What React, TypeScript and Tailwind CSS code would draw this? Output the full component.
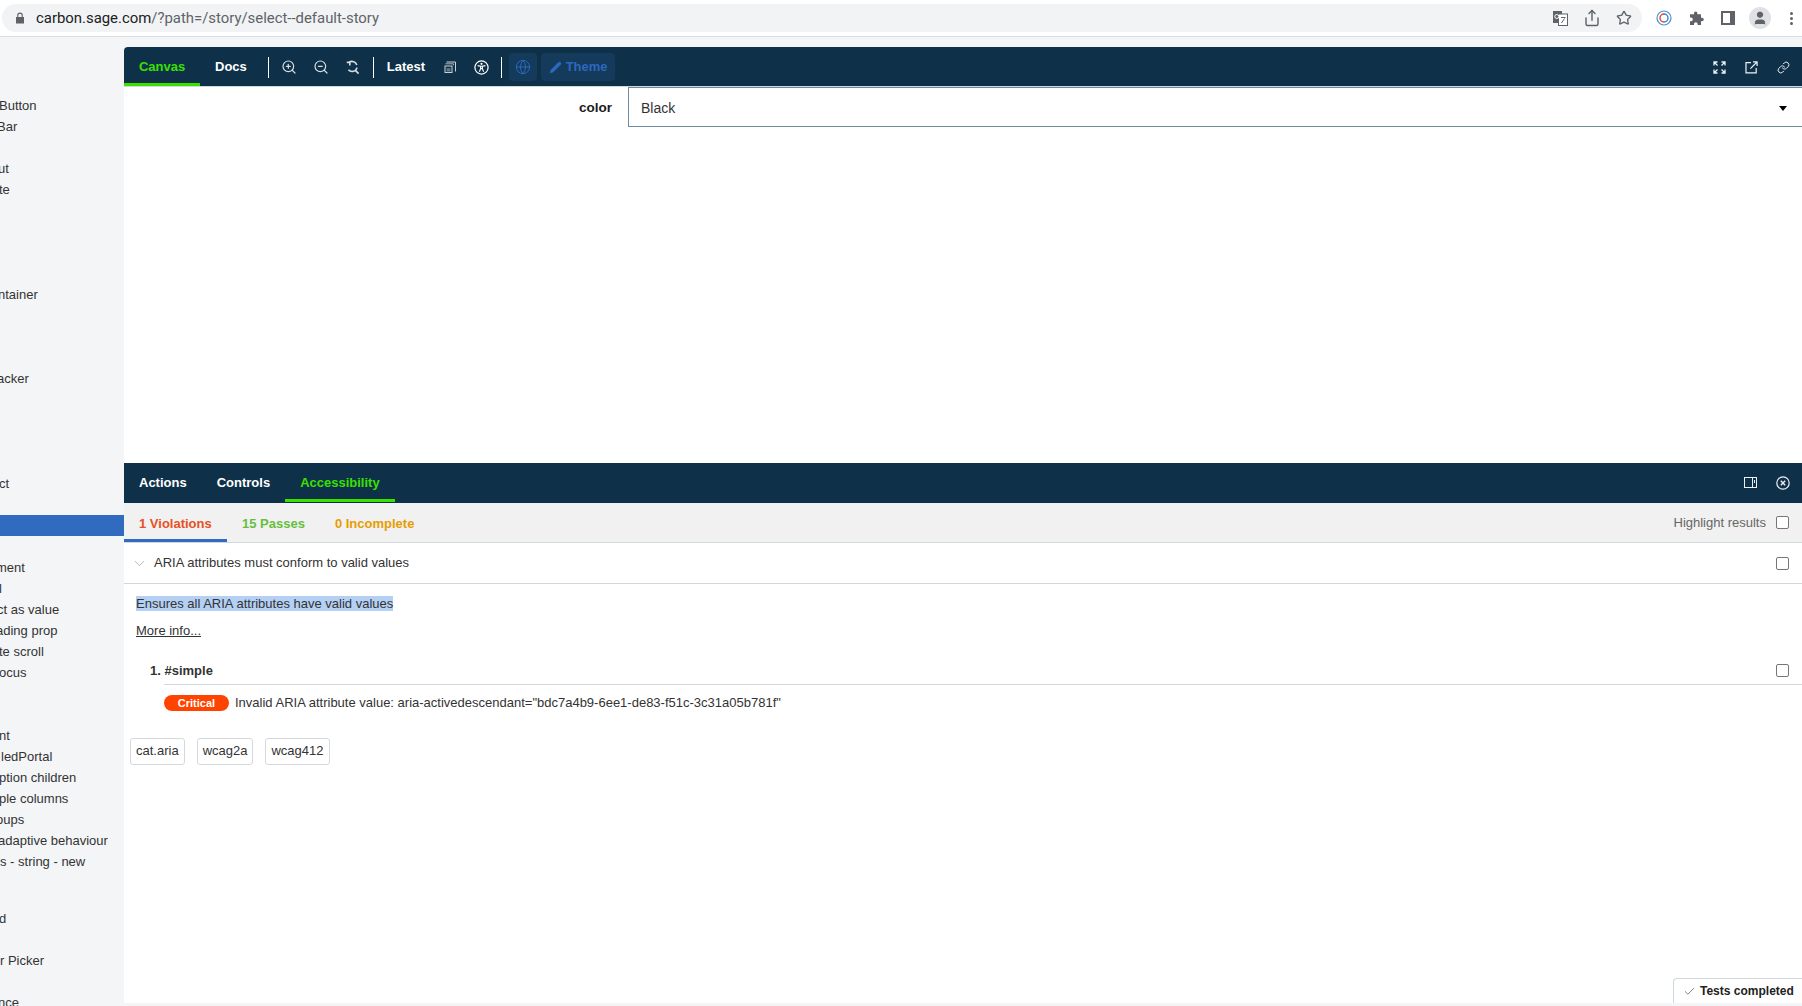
import { ChevronDown, Check, Globe, Link, Pencil, Share, Star, User, ZoomIn, ZoomOut } from "lucide-react";

const sidebarRows: { text?: string; cls?: string }[] = [
  { text: "Button", cls: "-ml-[1px]" },
  { text: "Bar", cls: "-ml-[3px]" },
  {},
  { text: "ut", cls: "-ml-[2px]" },
  { text: "te", cls: "-ml-[1px]" },
  {},
  {},
  {},
  {},
  { text: "ntainer", cls: "-ml-[2px]" },
  {},
  {},
  {},
  { text: "acker", cls: "-ml-[3px]" },
  {},
  {},
  {},
  {},
  { text: "ct", cls: "-ml-[1px]" },
  {},
  { cls: "bg-[#306bc0]" },
  {},
  { text: "ment", cls: "-ml-[4px]" },
  { text: "l", cls: "-ml-[1px]" },
  { text: "ct as value", cls: "-ml-[3px]" },
  { text: "ading prop", cls: "-ml-[4px]" },
  { text: "te scroll", cls: "-ml-[1px]" },
  { text: "ocus", cls: "-ml-[1px]" },
  {},
  {},
  { text: "nt", cls: "-ml-[1px]" },
  { text: "ledPortal", cls: "ml-[1px]" },
  { text: "ption children", cls: "-ml-[1px]" },
  { text: "ple columns", cls: "-ml-[1px]" },
  { text: "oups", cls: "-ml-[4px]" },
  { text: "adaptive behaviour", cls: "-ml-[2px]" },
  { text: "s - string - new" },
  {},
  { cls: "h-[15px]" },
  { text: "d", cls: "-ml-[1px]" },
  {},
  { text: "r Picker" },
  {},
  { text: "nce", cls: "-ml-[2px]" },
];

function ResetZoom() {
  return (
    <svg width="15" height="15" viewBox="0 0 15 15" fill="none" stroke="currentColor" strokeWidth="1.6">
      <path d="M4.2 2.2A5 5 0 0 1 11.8 5M12 7.6A5 5 0 0 1 3.4 9.8" />
      <path d="M10.4 10.4L13.6 13.6" />
      <path d="M1.8 2.4h3v3" />
    </svg>
  );
}

function LayersIcon() {
  return (
    <svg width="12" height="12" viewBox="0 0 12 12" fill="none" stroke="currentColor" strokeWidth="1">
      <path d="M2.5 1h9v9.5" />
      <path d="M1.5 2.8h8v1.4" opacity="0.8" />
      <rect x="1" y="5" width="7" height="6.5" />
      <rect x="2.5" y="7.2" width="4" height="3.4" fill="currentColor" opacity="0.45" stroke="none" />
    </svg>
  );
}

function AccessIcon() {
  return (
    <svg width="15" height="15" viewBox="0 0 15 15" fill="none" stroke="#fff">
      <circle cx="7.5" cy="7.5" r="6.6" strokeWidth="1.2" />
      <circle cx="7.5" cy="3.8" r="1.1" fill="#fff" stroke="none" />
      <path d="M3.6 5.6L6.6 6.3V8.6L5.4 11.8M11.4 5.6L8.4 6.3V8.6L9.6 11.8M6.6 6.3H8.4M6.6 8.6H8.4" strokeWidth="1.1" />
    </svg>
  );
}

function FullIcon() {
  return (
    <svg width="13" height="13" viewBox="0 0 13 13" fill="none" stroke="currentColor" strokeWidth="1.3">
      <path d="M1 4.5V1h3.5M1 1l3.5 3.5M12 4.5V1H8.5M12 1L8.5 4.5M1 8.5V12h3.5M1 12l3.5-3.5M12 8.5V12H8.5M12 12L8.5 8.5" />
    </svg>
  );
}

function OpenIcon() {
  return (
    <svg width="13" height="13" viewBox="0 0 13 13" fill="none" stroke="currentColor" strokeWidth="1.2">
      <path d="M6 1.6H1v10.2h10.2V7" />
      <path d="M5.4 7.6L12 1M8 .9h4.1V5" />
    </svg>
  );
}

function PanelIcon() {
  return (
    <svg width="13" height="11" viewBox="0 0 13 11" fill="none" stroke="currentColor" strokeWidth="1">
      <rect x="0.5" y="0.5" width="12" height="10" />
      <path d="M8.5 0.5v10" />
      <path d="M10.5 3v3" />
    </svg>
  );
}

function CloseCircle() {
  return (
    <svg width="14" height="14" viewBox="0 0 14 14" fill="none" stroke="currentColor" strokeWidth="1.2">
      <circle cx="7" cy="7" r="6.2" />
      <path d="M4.8 4.8l4.4 4.4M9.2 4.8l-4.4 4.4" strokeWidth="1.4" />
    </svg>
  );
}

function Box() {
  return <span className="block h-[13px] w-[13px] rounded-[2px] border border-[#767676] bg-white" />;
}

function ChromeBar() {
  return (
    <div className="flex h-[37px] shrink-0 items-center border-b border-[#dcdde0] bg-white pl-[2px]">
      <div className="flex h-[28px] w-[1640px] items-center rounded-full bg-[#f1f3f4] pl-[13px]">
        <svg width="10" height="12" viewBox="0 0 10 12" fill="#5f6368">
          <path d="M2.2 5V3.4a2.8 2.8 0 0 1 5.6 0V5H9v6.4H1V5zM3.3 5h3.4V3.4a1.7 1.7 0 0 0-3.4 0z" />
        </svg>
        <span className="ml-[11px] font-['Roboto',sans-serif] text-[14.9px] text-[#5f6368] [font-variant-ligatures:none]">
          <span className="text-[#202124]">carbon.sage.com</span>/?path=/story/select--default-story
        </span>
        <div className="ml-auto flex items-center gap-[15px] pr-[10px] text-[#5f6368]">
          <svg width="15" height="15" viewBox="0 0 15 15">
            <rect x="0" y="0" width="9" height="12" fill="#5f6368" />
            <rect x="5.5" y="3" width="9" height="11.5" fill="#fff" stroke="#5f6368" />
            <path d="M8 6.5h4.5M8.5 12l3-4.5" stroke="#5f6368" fill="none" />
            <circle cx="3.8" cy="5.5" r="2" fill="none" stroke="#fff" />
          </svg>
          <Share size={18} strokeWidth={1.9} />
          <Star size={16} strokeWidth={2} />
        </div>
      </div>
      <div className="ml-[14px] flex items-center text-[#5f6368]">
        <svg width="16" height="16" viewBox="0 0 16 16" fill="none">
          <circle cx="8" cy="8" r="7" stroke="#4a90d0" strokeWidth="1.2" />
          <path d="M8 4a4 4 0 0 0 0 8" stroke="#d9463a" strokeWidth="1.4" />
          <path d="M8 4a4 4 0 0 1 0 8" stroke="#3d7fc4" strokeWidth="1.4" />
        </svg>
        <svg className="ml-[17px]" width="15" height="15" viewBox="0 0 15 15" fill="#5f6368">
          <path d="M5 2.2a1.7 1.7 0 0 1 3.4 0V3.3H12v3.4h1a1.8 1.8 0 0 1 0 3.6h-1V14H8.6v-1a1.8 1.8 0 0 0-3.6 0v1H1v-3.8h1a1.8 1.8 0 0 0 0-3.6H1V3.3h4z" />
        </svg>
        <svg className="ml-[17px]" width="14" height="14" viewBox="0 0 14 14">
          <rect x="0" y="0" width="14" height="14" fill="#5f6368" />
          <rect x="2" y="2" width="7" height="10" fill="#fff" />
        </svg>
        <div className="ml-[14px] flex h-[22px] w-[22px] items-center justify-center rounded-full bg-[#dfe1e5]">
          <User size={16} fill="#5f6368" strokeWidth={1.5} />
        </div>
        <div className="ml-[19px] flex flex-col gap-[2px]">
          <span className="h-[3px] w-[3px] rounded-full bg-[#5f6368]" />
          <span className="h-[3px] w-[3px] rounded-full bg-[#5f6368]" />
          <span className="h-[3px] w-[3px] rounded-full bg-[#5f6368]" />
        </div>
      </div>
    </div>
  );
}

function Sidebar() {
  return (
    <div className="w-[124px] shrink-0 overflow-hidden bg-[#f3f5f7] pt-[58px] text-[13px] text-[#333]">
      {sidebarRows.map((r, i) => {
        const isBox = !r.text && r.cls;
        return (
          <div key={i} className={isBox ? r.cls : ""}>
            {r.cls !== "h-[15px]" && (
              <div className="h-[21px] whitespace-nowrap leading-[21px]">
                {r.text && <span className={`block ${r.cls ?? ""}`}>{r.text}</span>}
              </div>
            )}
          </div>
        );
      })}
    </div>
  );
}

function Toolbar() {
  return (
    <div className="flex h-[40px] shrink-0 items-center rounded-tl-[4px] border-b border-[#cfd8dd] bg-[#0f3049] pt-[1px] text-[13px] font-bold text-white">
      <div className="flex h-full w-[76px] items-center justify-center border-y-[3px] border-t-transparent border-b-[#39e000] text-[#39e000]">
        Canvas
      </div>
      <span className="ml-[15px]">Docs</span>
      <span className="ml-[21px] h-[21px] w-px bg-white" />
      <ZoomIn className="ml-[12px] text-[#d6dde2]" size={16} strokeWidth={1.8} />
      <ZoomOut className="ml-[16px] text-[#d6dde2]" size={16} strokeWidth={1.8} />
      <span className="ml-[16px] text-[#d6dde2]">
        <ResetZoom />
      </span>
      <span className="ml-[13px] h-[21px] w-px bg-white" />
      <span className="ml-[13px]">Latest</span>
      <span className="ml-[19px] text-[#c9d2d9]">
        <LayersIcon />
      </span>
      <span className="ml-[18px]">
        <AccessIcon />
      </span>
      <span className="ml-[12px] h-[21px] w-px bg-white" />
      <span className="ml-[7px] flex h-[28px] w-[28px] items-center justify-center rounded-[4px] bg-[#143a5c] text-[#2d68bd]">
        <Globe size={16} strokeWidth={1.5} />
      </span>
      <span className="ml-[4px] flex h-[28px] w-[74px] items-center justify-center gap-[4px] rounded-[4px] bg-[#143a5c] text-[#2d68bd]">
        <Pencil size={13} fill="currentColor" strokeWidth={1} />
        Theme
      </span>
      <div className="ml-auto flex items-center gap-[19px] pr-[12px] text-[#eef1f3]">
        <FullIcon />
        <OpenIcon />
        <Link size={13} strokeWidth={1.8} />
      </div>
    </div>
  );
}

function CanvasArea() {
  return (
    <div className="flex h-[376px] shrink-0 items-start overflow-hidden bg-white">
      <span className="ml-[455px] mt-[12px] text-[13.5px] font-bold leading-[18px] text-[#1a1a1a]">color</span>
      <div className="-mr-[20px] ml-[16px] flex h-[40px] flex-1 items-center justify-between border border-[#6f8ba0] pl-[12px] pr-[34px] pt-[2px] text-[14px] text-[#333]">
        Black
        <span className="h-0 w-0 border-x-[4px] border-t-[5px] border-x-transparent border-t-black" />
      </div>
    </div>
  );
}

function AddonPanel() {
  return (
    <div className="relative flex min-h-0 flex-1 flex-col bg-white text-[13px] text-[#333]">
      <div className="flex h-[40px] shrink-0 items-center bg-[#0f3049] pb-[1px] font-bold text-white">
        <span className="ml-[15px]">Actions</span>
        <span className="ml-[30px]">Controls</span>
        <div className="ml-[15px] flex h-[39px] items-center border-y-[3px] border-t-transparent border-b-[#39e000] px-[15px] text-[#39e000]">
          Accessibility
        </div>
        <div className="ml-auto flex items-center gap-[19px] pr-[12px] text-[#eef1f3]">
          <PanelIcon />
          <CloseCircle />
        </div>
      </div>
      <div className="flex h-[40px] shrink-0 items-center border-b border-[#cfd8dd] bg-[#f1f1f1] font-bold">
        <div className="flex h-full w-[103px] items-center border-t-[5px] border-b-[3px] border-t-transparent border-b-[#306bc0] pl-[15px] text-[#e8501f]">
          1 Violations
        </div>
        <span className="ml-[15px] mt-[2px] text-[#66bf3c]">15 Passes</span>
        <span className="ml-[30px] mt-[2px] text-[#e69d00]">0 Incomplete</span>
        <span className="ml-auto text-[13px] font-normal text-[#666]">Highlight results</span>
        <span className="ml-[10px] mr-[13px]">
          <Box />
        </span>
      </div>
      <div className="flex h-[41px] shrink-0 items-center border-b border-[#cfd8dd]">
        <ChevronDown className="ml-[7px] text-[#9aa5ad]" size={17} strokeWidth={1.1} />
        <span className="ml-[6px]">ARIA attributes must conform to valid values</span>
        <span className="ml-auto mr-[13px]">
          <Box />
        </span>
      </div>
      <div className="pl-[12px] pt-[12px]">
        <p className="leading-[16px]">
          <span className="bg-[#b4d0f5]">Ensures all ARIA attributes have valid values</span>
        </p>
        <p className="mt-[11px] leading-[16px] underline">More info...</p>
      </div>
      <div className="ml-[40px] mt-[18px] flex h-[28px] items-center border-b border-[#cfd8dd] font-bold">
        <span className="-ml-[14px]">1. #simple</span>
        <span className="ml-auto mr-[13px]">
          <Box />
        </span>
      </div>
      <div className="ml-[40px] mt-[8px] flex items-center">
        <span className="flex h-[16px] w-[65px] items-center justify-center rounded-full bg-[#ff4400] text-[11px] font-bold text-white">
          Critical
        </span>
        <span className="ml-[6px]">Invalid ARIA attribute value: aria-activedescendant="bdc7a4b9-6ee1-de83-f51c-3c31a05b781f"</span>
      </div>
      <div className="ml-[6px] mt-[25px] flex gap-[12px]">
        {["cat.aria", "wcag2a", "wcag412"].map((t) => (
          <span key={t} className="flex h-[27px] items-center rounded-[3px] border border-[#d5d9dc] px-[5px]">
            {t}
          </span>
        ))}
      </div>
      <div className="absolute bottom-0 right-0 flex h-[25px] w-[129px] items-center gap-[4px] rounded-tl-[4px] border-l border-t border-[#cfd8dd] bg-white pl-[9px] text-[12px] font-bold text-[#222]">
        <Check className="text-[#666]" size={13} strokeWidth={1.5} />
        Tests completed
      </div>
    </div>
  );
}

export default function App() {
  return (
    <div className="flex h-[1006px] w-[1802px] flex-col overflow-hidden bg-[#f3f5f7] font-['Liberation_Sans',Arial,sans-serif]">
      <ChromeBar />
      <div className="flex min-h-0 flex-1">
        <Sidebar />
        <div className="flex min-w-0 flex-1 flex-col pb-[3px] pt-[10px]">
          <Toolbar />
          <CanvasArea />
          <AddonPanel />
        </div>
      </div>
    </div>
  );
}
